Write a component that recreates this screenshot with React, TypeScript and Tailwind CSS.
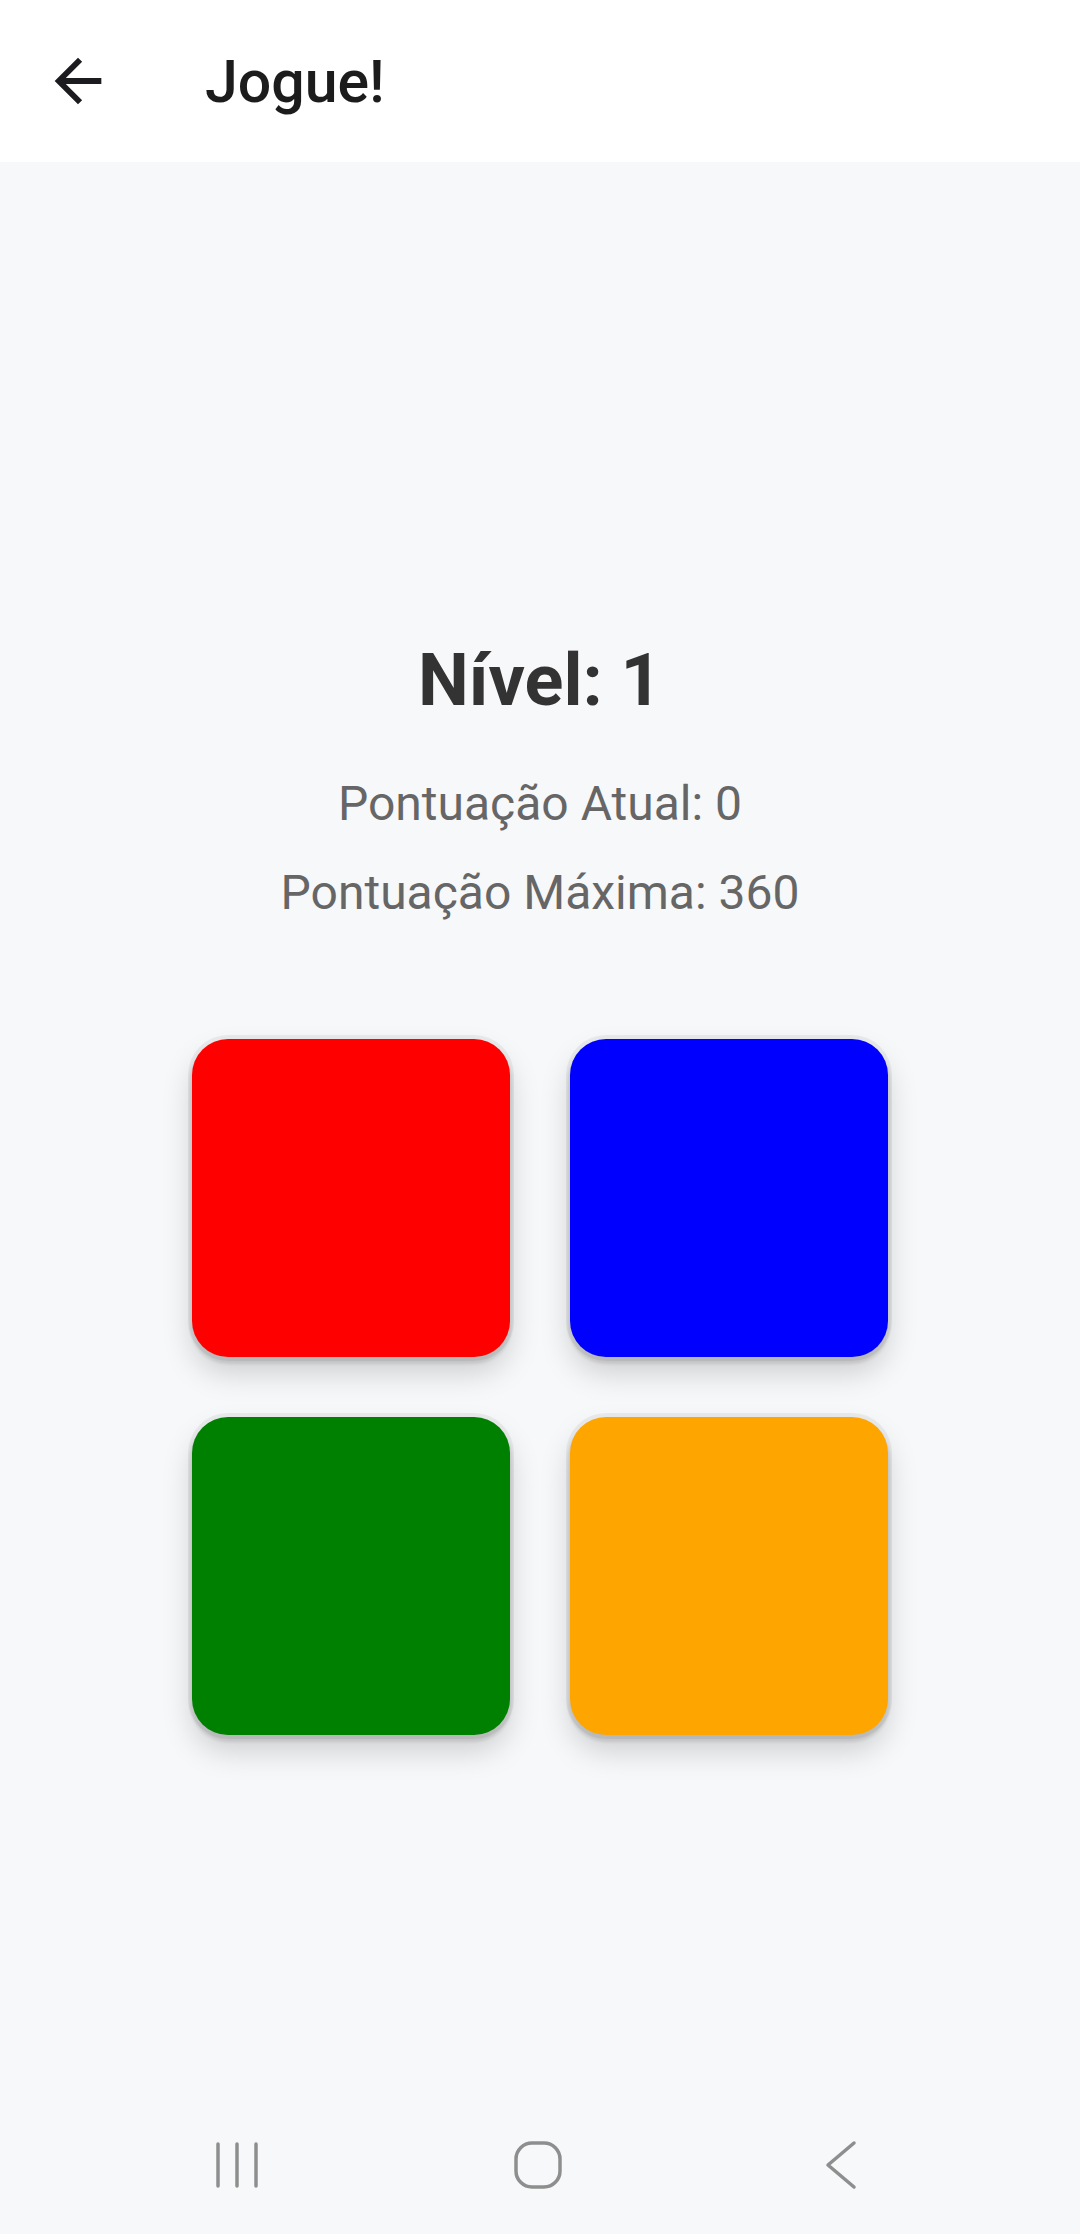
import React from "react";

const colors = ["bg-[#ff0000]", "bg-[#0000ff]", "bg-[#008000]", "bg-[#ffa500]"];

export default function App() {
  return (
    <div
      className="flex min-h-[2234px] w-[1080px] flex-col bg-[#f7f8fa]"
      style={{ fontFamily: "Roboto, 'Noto Sans', sans-serif" }}
    >
      <header className="flex h-[162px] items-center bg-white">
        <div className="ml-[43px] flex h-[70px] w-[70px] items-center justify-center">
          <svg viewBox="0 0 24 24" width="70" height="70" fill="#1c1b1f">
            <path d="M20 11H7.83l5.59-5.59L12 4l-8 8 8 8 1.41-1.41L7.83 13H20v-2z" />
          </svg>
        </div>
        <h1 className="ml-[92px] text-[59px] font-medium leading-none text-[#1c1c1c]">Jogue!</h1>
      </header>

      <main className="flex flex-1 flex-col items-center pt-[477px]">
        <div className="text-[72px] font-bold leading-[84px] text-[#333333]">Nível: 1</div>
        <div className="mt-[53px] text-[48px] leading-[56px] text-[#666666]">Pontuação Atual: 0</div>
        <div className="mt-[33px] text-[48px] leading-[56px] text-[#666666]">Pontuação Máxima: 360</div>

        <div className="mt-[118px] grid grid-cols-2 gap-[60px]">
          {colors.map((c) => (
            <button
              key={c}
              className={`h-[318px] w-[318px] rounded-[36px] ${c} shadow-[0_0_0_4px_rgba(0,0,0,0.05),0_5px_3px_2px_rgba(0,0,0,0.09),0_16px_30px_rgba(0,0,0,0.17)]`}
            />
          ))}
        </div>
      </main>

      <nav className="flex h-[138px] items-center justify-between pl-[215px] pr-[222px]">
        <svg width="44" height="48" viewBox="0 0 44 48" fill="none" stroke="#8e8e8e" strokeWidth="3.5" strokeLinecap="round">
          <path d="M3 3v42M22 3v42M41 3v42" />
        </svg>
        <svg className="mr-[8px]" width="50" height="50" viewBox="0 0 50 50" fill="none" stroke="#8e8e8e" strokeWidth="3.5">
          <rect x="3" y="3" width="44" height="44" rx="16" />
        </svg>
        <svg width="34" height="50" viewBox="0 0 34 50" fill="none" stroke="#8e8e8e" strokeWidth="3.5" strokeLinecap="round" strokeLinejoin="round">
          <path d="M30 3L4 25l26 22" />
        </svg>
      </nav>
    </div>
  );
}
